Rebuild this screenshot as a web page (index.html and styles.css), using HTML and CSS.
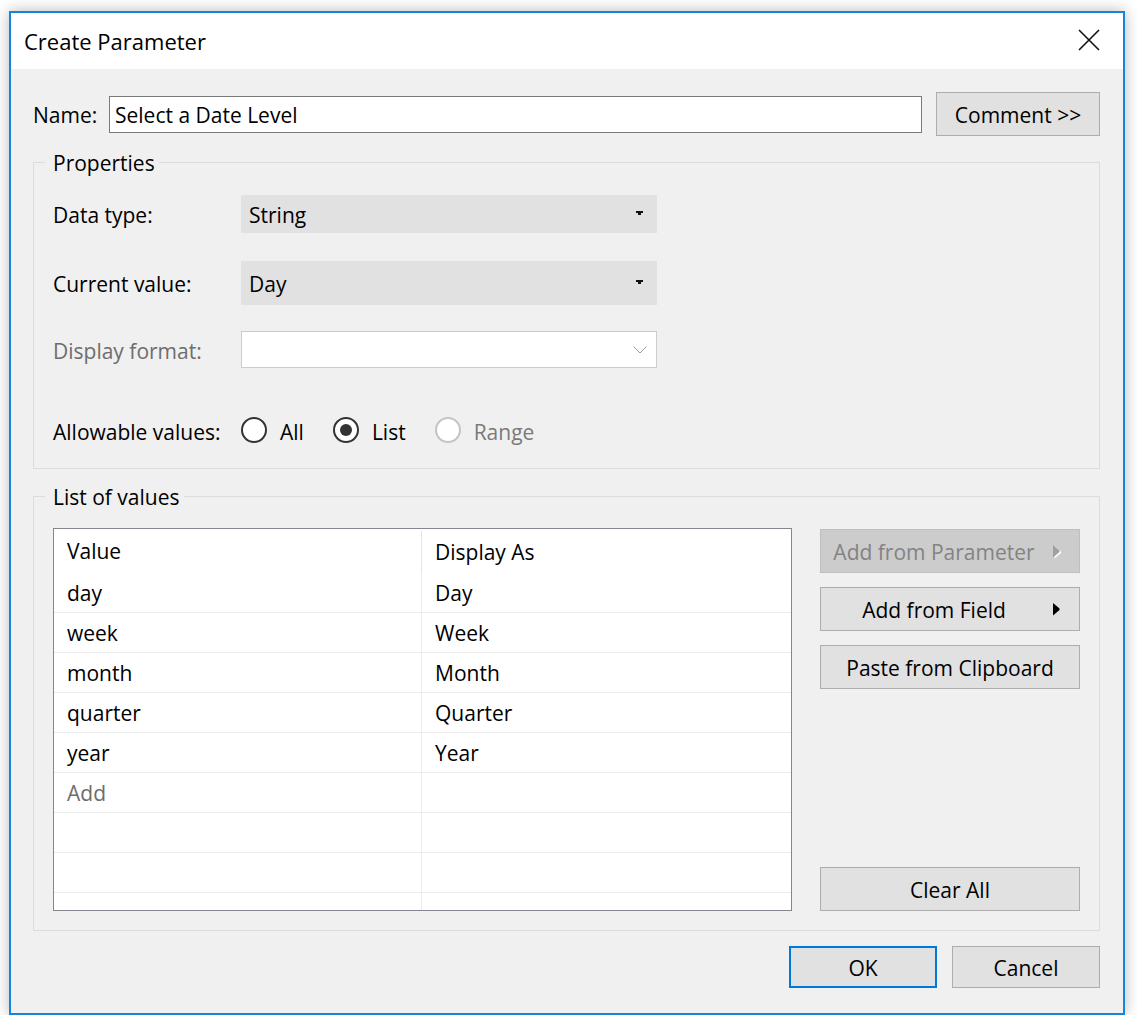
FILE: index.html
```html
<!DOCTYPE html>
<html lang="en">
<head>
<meta charset="utf-8">
<title>Create Parameter</title>
<link rel="stylesheet" href="styles.css">
</head>
<body>
<div class="window">
  <div class="titlebar">
    <span class="title">Create Parameter</span>
    <span class="close" aria-label="Close">
      <svg width="22" height="22" viewBox="0 0 22 22"><path d="M1 1L21 21M21 1L1 21" stroke="#111" stroke-width="1.6" fill="none"/></svg>
    </span>
  </div>
  <div class="body">
    <div class="name-row">
      <span class="label name-label">Name:</span>
      <div class="textbox">Select a Date Level</div>
      <div class="btn comment">Comment &gt;&gt;</div>
    </div>

    <fieldset class="group props">
      <legend>Properties</legend>
      <div class="prop-row row-type">
        <span class="label">Data type:</span>
        <div class="combo">String
          <svg class="caret" width="7" height="5" viewBox="0 0 7 5"><path d="M0 0H7V2H5V4H2V2H0Z" fill="#111"/></svg>
        </div>
      </div>
      <div class="prop-row row-current">
        <span class="label">Current value:</span>
        <div class="combo tall">Day
          <svg class="caret" width="7" height="5" viewBox="0 0 7 5"><path d="M0 0H7V2H5V4H2V2H0Z" fill="#111"/></svg>
        </div>
      </div>
      <div class="prop-row row-format">
        <span class="label disabled">Display format:</span>
        <div class="field-disabled">
          <svg class="chev" width="14" height="8" viewBox="0 0 14 8"><path d="M0.5 0.5L7 7L13.5 0.5" stroke="#9a9a9a" stroke-width="1" fill="none"/></svg>
        </div>
      </div>
      <div class="prop-row row-allow">
        <span class="label">Allowable values:</span>
        <div class="radios">
          <span class="radio-item"><span class="radio"></span><span class="rtext">All</span></span>
          <span class="radio-item"><span class="radio checked"></span><span class="rtext">List</span></span>
          <span class="radio-item disabled"><span class="radio off"></span><span class="rtext">Range</span></span>
        </div>
      </div>
    </fieldset>

    <fieldset class="group values">
      <legend>List of values</legend>
      <div class="values-body">
        <div class="grid">
          <div class="grid-head">
            <div class="cell">Value</div>
            <div class="cell">Display As</div>
          </div>
          <div class="grid-row"><div class="cell">day</div><div class="cell">Day</div></div>
          <div class="grid-row"><div class="cell">week</div><div class="cell">Week</div></div>
          <div class="grid-row"><div class="cell">month</div><div class="cell">Month</div></div>
          <div class="grid-row"><div class="cell">quarter</div><div class="cell">Quarter</div></div>
          <div class="grid-row"><div class="cell">year</div><div class="cell">Year</div></div>
          <div class="grid-row"><div class="cell placeholder">Add</div><div class="cell"></div></div>
          <div class="grid-row"><div class="cell"></div><div class="cell"></div></div>
          <div class="grid-row"><div class="cell"></div><div class="cell"></div></div>
          <div class="grid-row"><div class="cell"></div><div class="cell"></div></div>
        </div>
        <div class="side">
          <div class="btn side-btn has-sub is-disabled">Add from Parameter
            <svg class="sub" width="9" height="14" viewBox="0 0 9 14"><path d="M1.5 1L8 6.5V8L1.5 13.5Z" fill="#ffffff"/><path d="M0 0L6.5 5.5V7L0 12.5Z" fill="#a0a0a0"/></svg>
          </div>
          <div class="btn side-btn has-sub">Add from Field
            <svg class="sub" width="9" height="14" viewBox="0 0 9 14"><path d="M0 0L6.5 5.5V7L0 12.5Z" fill="#000"/></svg>
          </div>
          <div class="btn side-btn">Paste from Clipboard</div>
          <div class="spacer"></div>
          <div class="btn side-btn">Clear All</div>
        </div>
      </div>
    </fieldset>

    <div class="footer">
      <div class="btn foot-btn ok">OK</div>
      <div class="btn foot-btn">Cancel</div>
    </div>
  </div>
</div>
</body>
</html>
```

FILE: styles.css
```css
html, body {
  margin: 0;
  padding: 0;
  background: #ffffff;
}

body {
  font-family: "Open Sans", "Noto Sans", "Liberation Sans", sans-serif;
  font-size: 21px;
  color: #000;
  padding: 11px 0 0 9px;
}

.window {
  box-sizing: border-box;
  width: 1116px;
  height: 1004px;
  border: 2px solid #1883d7;
  background: #f0f0f0;
  box-shadow: 0 0 14px rgba(0, 0, 0, 0.28);
  display: flex;
  flex-direction: column;
}

.titlebar {
  height: 56px;
  background: #ffffff;
  display: flex;
  align-items: center;
  justify-content: space-between;
  padding: 0 23px 0 13px;
}

.title {
  font-size: 22px;
}

.close {
  display: flex;
  width: 22px;
  height: 22px;
  margin-top: -2px;
}

.body {
  flex: 1;
  padding: 23px 23px 0 22px;
  display: flex;
  flex-direction: column;
}

.label {
  white-space: nowrap;
  padding-top: 2px;
}

.disabled {
  color: #6d6d6d;
}

/* Name row */
.name-row {
  height: 44px;
  display: flex;
  align-items: center;
}

.name-label {
  width: 76px;
}

.textbox {
  box-sizing: border-box;
  flex: 1;
  height: 37px;
  border: 1px solid #7a7a7a;
  background: #fff;
  padding: 2px 5px 0;
  display: flex;
  align-items: center;
}

.btn {
  box-sizing: border-box;
  background: #e1e1e1;
  border: 1px solid #adadad;
  display: flex;
  align-items: center;
  justify-content: center;
  white-space: nowrap;
  padding-top: 2px;
}

.comment {
  width: 164px;
  height: 44px;
  margin-left: 14px;
}

/* Group boxes */
.group {
  margin: 0;
  border: 1px solid #dcdcdc;
  padding: 0 19px;
  min-width: 0;
}

.group legend {
  font-size: 21px;
  line-height: 26px;
  margin-left: -8px;
  padding: 2px 4px 0 8px;
}

.props {
  margin-top: 12px;
  padding-top: 19px;
  padding-bottom: 25px;
}

.prop-row {
  display: flex;
  align-items: center;
}

.prop-row .label {
  width: 188px;
  flex: none;
}

.row-type { height: 38px; }
.row-current { height: 44px; margin-top: 28px; }
.row-format { height: 37px; margin-top: 26px; }
.row-allow { height: 26px; margin-top: 49px; }

.row-allow .label,
.rtext {
  padding-top: 3px;
}

.combo {
  box-sizing: border-box;
  width: 416px;
  height: 38px;
  background: #e1e1e1;
  display: flex;
  align-items: center;
  justify-content: space-between;
  padding: 2px 14px 0 8px;
}

.combo.tall {
  height: 44px;
}

.caret {
  margin-top: -3px;
}

.field-disabled {
  box-sizing: border-box;
  width: 416px;
  height: 37px;
  background: #fff;
  border: 1px solid #cccccc;
  display: flex;
  align-items: center;
  justify-content: flex-end;
  padding-right: 9px;
}

.radios {
  display: flex;
  align-items: center;
  gap: 29px;
}

.radio-item {
  display: flex;
  align-items: center;
  gap: 13px;
}

.radio-item.disabled {
  color: #7a7a7a;
}

.radio {
  box-sizing: border-box;
  width: 26px;
  height: 26px;
  border: 2px solid #333333;
  border-radius: 50%;
  background: #ffffff;
  display: flex;
  align-items: center;
  justify-content: center;
}

.radio.checked::after {
  content: "";
  width: 12px;
  height: 12px;
  border-radius: 50%;
  background: #333333;
}

.radio.off {
  border-color: #c4c4c4;
}

/* List of values */
.values {
  margin-top: 13px;
  padding-top: 18px;
  padding-bottom: 19px;
}

.values-body {
  display: flex;
  gap: 28px;
  height: 383px;
}

.grid {
  box-sizing: border-box;
  width: 739px;
  height: 383px;
  border: 1px solid #828790;
  background: #ffffff;
  overflow: hidden;
}

.grid-head,
.grid-row {
  display: grid;
  grid-template-columns: 367px 1fr;
}

.grid-head {
  height: 44px;
}

.grid-row {
  height: 39px;
  border-top: 1px solid #ececec;
}

.grid-head + .grid-row {
  border-top: none;
}

.cell {
  display: flex;
  align-items: center;
  padding: 0 0 0 13px;
}

.cell + .cell {
  border-left: 1px solid #ececec;
}

.grid-head .cell + .cell {
  border-left-color: #e4e4e4;
  margin: 2px 0 0;
}

.placeholder {
  color: #6d6d6d;
}

.side {
  width: 260px;
  display: flex;
  flex-direction: column;
  gap: 14px;
  padding-top: 1px;
}

.side-btn {
  height: 44px;
  position: relative;
}

.side-btn.has-sub {
  padding-right: 32px;
}

.side-btn .sub {
  position: absolute;
  right: 17px;
  top: 15px;
}

.is-disabled {
  background: #cccccc;
  border-color: #bfbfbf;
  color: #838383;
}

.spacer {
  flex: 1;
}

/* Footer */
.footer {
  display: flex;
  justify-content: flex-end;
  gap: 15px;
  margin-top: 15px;
}

.foot-btn {
  width: 148px;
  height: 42px;
}

.ok {
  border: 2px solid #0078d7;
}
```
